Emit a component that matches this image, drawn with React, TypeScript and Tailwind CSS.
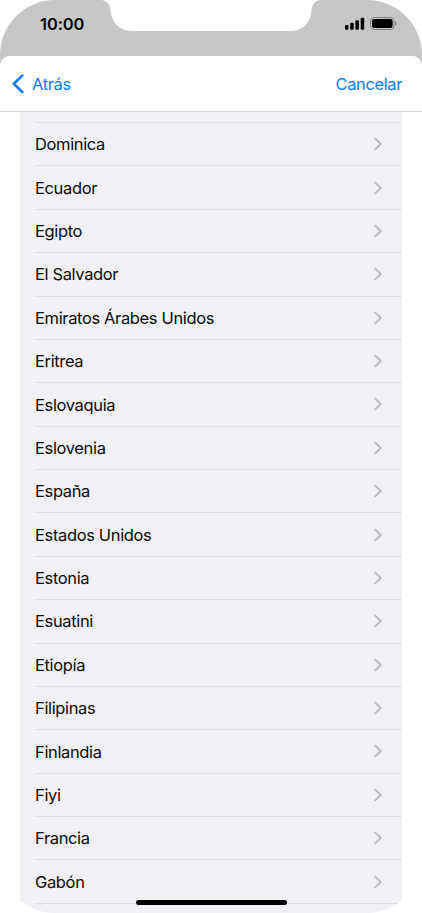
const countries = [
  'Dominica',
  'Ecuador',
  'Egipto',
  'El Salvador',
  'Emiratos Árabes Unidos',
  'Eritrea',
  'Eslovaquia',
  'Eslovenia',
  'España',
  'Estados Unidos',
  'Estonia',
  'Esuatini',
  'Etiopía',
  'Filipinas',
  'Finlandia',
  'Fiyi',
  'Francia',
  'Gabón',
];

const StatusBar = () => (
  <div className="relative flex h-[70px] shrink-0 items-start justify-between bg-[#c7c7c7] pl-10 pr-[25px]">
    <span className="mt-[14px] text-[16.5px] leading-5 font-semibold tracking-[-0.1px] text-black">10:00</span>

    {/* Notch */}
    <svg className="absolute left-[101px] top-0" width="220" height="32" viewBox="0 0 220 32" fill="#fff">
      <path d="M0 0C6 0 9.500 5 9.500 11C10.500 22 18.500 31 31 31H189.500C202 31 209.500 22 210.500 11C210.500 5 214 0 220 0Z" />
    </svg>

    <div className="mt-[17px] flex items-center gap-[5px]">
      <svg width="20" height="13" viewBox="0 0 20 13" fill="#000">
        <rect x="0" y="8" width="3.500" height="4.800" rx="1" />
        <rect x="5.200" y="5.800" width="3.500" height="7" rx="1" />
        <rect x="10.400" y="3.200" width="3.500" height="9.600" rx="1" />
        <rect x="15.700" y="0.800" width="3.500" height="12" rx="1" />
      </svg>
      <svg width="27" height="13" viewBox="0 0 27 13">
        <rect x="0.500" y="0.500" width="23.600" height="12" rx="3.600" fill="none" stroke="#7f7f7f" />
        <rect x="2" y="2" width="20.600" height="9" rx="2.200" fill="#000" />
        <path d="M25.200 4.500v4c.8-.3 1.400-1.100 1.400-2s-.6-1.700-1.400-2Z" fill="#7f7f7f" />
      </svg>
    </div>
  </div>
);

const Chevron = () => (
  <svg width="8" height="14" viewBox="0 0 8 14" fill="none" stroke="#bcbcc0" strokeWidth="2" strokeLinecap="round" strokeLinejoin="round">
    <path d="M1.200 1.600 6.700 7l-5.500 5.400" />
  </svg>
);

const App = () => {
  return (
    <div className="h-[913px] w-[422px] overflow-hidden bg-white font-['Inter',sans-serif]">
      <div className="relative flex h-full flex-col overflow-hidden rounded-[55px] bg-white">
        <StatusBar />

        <div className="relative -mt-[14px] flex min-h-0 flex-1 flex-col overflow-hidden rounded-t-[10px] bg-white">
          {/* Navigation */}
          <div className="flex h-14 shrink-0 items-center justify-between border-b border-[#dcdcde] bg-[#fdfdfd] pl-3 pr-5 text-[16.5px] tracking-[-0.38px] text-[#0f7eee]">
            <button className="flex items-center gap-2">
              <svg width="12" height="20" viewBox="0 0 12 20" fill="none" stroke="currentColor" strokeWidth="2.600" strokeLinecap="round" strokeLinejoin="round">
                <path d="M10.300 1.600 1.800 9.800l8.500 8.200" />
              </svg>
              <span className="pt-[2px]">Atrás</span>
            </button>
            <button className="pt-[2px]">Cancelar</button>
          </div>

          {/* Country list */}
          <div className="mx-5 flex-1 bg-[#f1f0f5] pl-[15px] pt-[10px]">
            <ul className="border-t border-[#dfdee3]">
              {countries.map((country) => (
                <li
                  key={country}
                  className="flex h-[43.39px] items-center justify-between border-b border-[#dfdee3] pr-5 text-[16.5px] tracking-[-0.36px] text-[#0b0b0c]"
                >
                  <span className="pt-px">{country}</span>
                  <Chevron />
                </li>
              ))}
            </ul>
          </div>
        </div>

        {/* Home indicator */}
        <div className="absolute bottom-2 left-[136px] h-[5px] w-[151px] rounded-full bg-black" />
      </div>
    </div>
  );
};

export default App;
